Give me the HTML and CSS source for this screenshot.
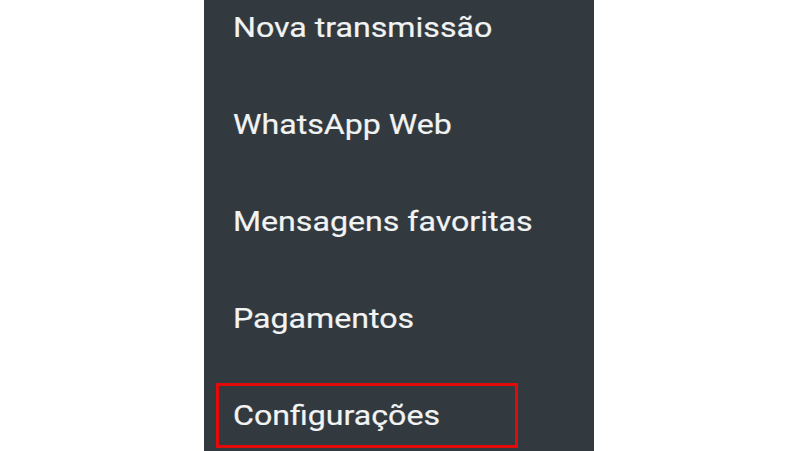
FILE: index.html
```html
<!DOCTYPE html>
<html lang="pt">
<head>
<meta charset="utf-8">
<link rel="stylesheet" href="styles.css">
</head>
<body>
<div class="page">
  <nav class="menu">
    <div class="item"><span class="label"><span class="text">Nova transmissão</span></span></div>
    <div class="item"><span class="label"><span class="text">WhatsApp Web</span></span></div>
    <div class="item"><span class="label"><span class="text">Mensagens favoritas</span></span></div>
    <div class="item"><span class="label"><span class="text">Pagamentos</span></span></div>
    <div class="item"><span class="label highlight"><span class="text">Configurações</span></span></div>
  </nav>
</div>
</body>
</html>
```
FILE: styles.css
```css
html, body {
  margin: 0;
  padding: 0;
  background: #ffffff;
}
.page {
  width: 800px;
  height: 451px;
  overflow: hidden;
  display: flex;
}
.menu {
  margin-left: 204px;
  width: 390px;
  height: 451px;
  background: #323a40;
  display: flex;
  flex-direction: column;
  overflow: hidden;
}
.item {
  flex: 0 0 97px;
  display: flex;
  align-items: center;
  padding-left: 12px;
}
.item:first-child {
  margin-top: -21px;
}
.label {
  display: block;
  font-family: Roboto, "Noto Sans", sans-serif;
  font-size: 27px;
  line-height: 32px;
  color: #f2f3f3;
  border: 3px solid transparent;
  padding: 14px 15px 13px 14px;
  white-space: nowrap;
}
.text {
  display: inline-block;
  transform: scaleX(1.19);
  transform-origin: left center;
  -webkit-text-stroke: 0.2px #f2f3f3;
}
.highlight {
  border-color: #e20a0a;
  width: 267px;
  box-sizing: content-box;
}
```
